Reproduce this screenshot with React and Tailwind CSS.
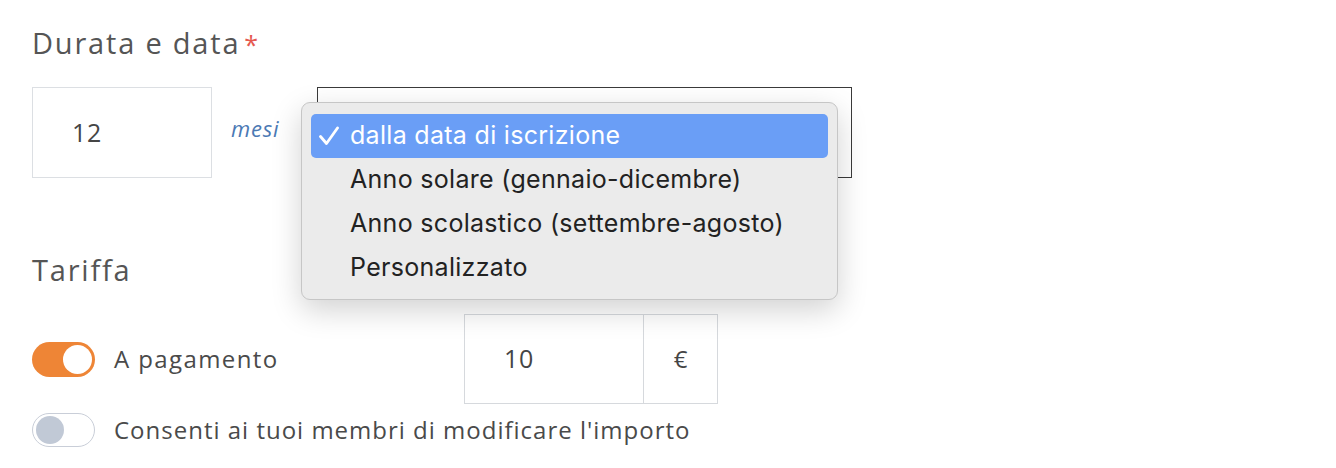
import React from "react";

function Toggle({ on }) {
  if (on) {
    return (
      <div className="flex h-[35px] w-[63px] shrink-0 items-center justify-end rounded-full bg-[#ee8536] pr-[3px]">
        <div className="h-[29px] w-[29px] rounded-full bg-white" />
      </div>
    );
  }
  return (
    <div className="flex h-[34px] w-[63px] shrink-0 items-center justify-start rounded-full border border-[#c9ced8] bg-white pl-[3px]">
      <div className="h-[28px] w-[28px] rounded-full bg-[#c1c9d6]" />
    </div>
  );
}

export default function App() {
  const body = { fontFamily: "'Open Sans', Lato, sans-serif" };
  return (
    <div className="h-[468px] w-[1336px] overflow-hidden bg-white pl-[32px] pt-[25px]" style={body}>
      <h2 className="flex h-[36px] items-center text-[29px] font-normal tracking-[1.8px] text-[#555555]">
        Durata e data
        <span className="ml-[4px] self-start pt-[1px] text-[25px] text-[#e5584f]">*</span>
      </h2>

      <div className="mt-[26px] flex items-start">
        <div className="flex h-[91px] w-[180px] shrink-0 items-center border border-[#dcdfe3] pl-[39px] text-[25px] tracking-[0.8px] text-[#454545]">
          12
        </div>
        <div className="ml-[19px] mt-[25px] w-[86px] shrink-0 text-[22px] italic tracking-[0.8px] text-[#4b79b4]">mesi</div>
        <div className="relative h-[91px] w-[535px] shrink-0 border border-[#3a3a3a] bg-white">
          <div
            className="absolute left-[-17px] top-[14px] z-10 w-[537px] rounded-[9px] border border-[#c6c6c6] bg-[#ebebeb] px-[9px] pb-[9px] pt-[11px] shadow-[0_10px_30px_rgba(0,0,0,0.18)]"
            style={{ fontFamily: "Inter, 'Noto Sans', sans-serif" }}
          >
            <div className="flex h-[44px] items-center rounded-[5px] bg-[#6a9ef6] pl-[8px] text-[25px] tracking-[0.3px] text-white">
              <svg className="mr-[11px] shrink-0" width="20" height="20" viewBox="0 0 20 20" fill="none">
                <path d="M1.5 10.5 L7.5 17.5 L18.5 2" stroke="white" strokeWidth="2.8" strokeLinecap="round" strokeLinejoin="round" />
              </svg>
              <span>dalla data di iscrizione</span>
            </div>
            {["Anno solare (gennaio-dicembre)", "Anno scolastico (settembre-agosto)", "Personalizzato"].map((t) => (
              <div key={t} className="flex h-[44px] items-center pl-[39px] text-[25px] tracking-[0.3px] text-[#222222]">
                {t}
              </div>
            ))}
          </div>
        </div>
      </div>

      <h2 className="mt-[74px] flex h-[36px] items-center text-[29px] font-normal tracking-[1.8px] text-[#555555]">
        Tariffa
      </h2>

      <div className="mt-[26px] flex items-center">
        <Toggle on />
        <span className="ml-[19px] w-[350px] shrink-0 text-[24px] tracking-[1.4px] text-[#4a4a4a]">A pagamento</span>
        <div className="flex h-[90px] w-[254px] shrink-0 border border-[#d6d9dd]">
          <div className="flex w-[179px] items-center border-r border-[#d6d9dd] pl-[39px] text-[25px] tracking-[0.8px] text-[#454545]">
            10
          </div>
          <div className="flex flex-1 items-center justify-center text-[24px] text-[#454545]">€</div>
        </div>
      </div>

      <div className="mt-[8px] flex items-center">
        <Toggle />
        <span className="ml-[19px] text-[24px] tracking-[1px] text-[#4a4a4a]">Consenti ai tuoi membri di modificare l'importo</span>
      </div>
    </div>
  );
}
